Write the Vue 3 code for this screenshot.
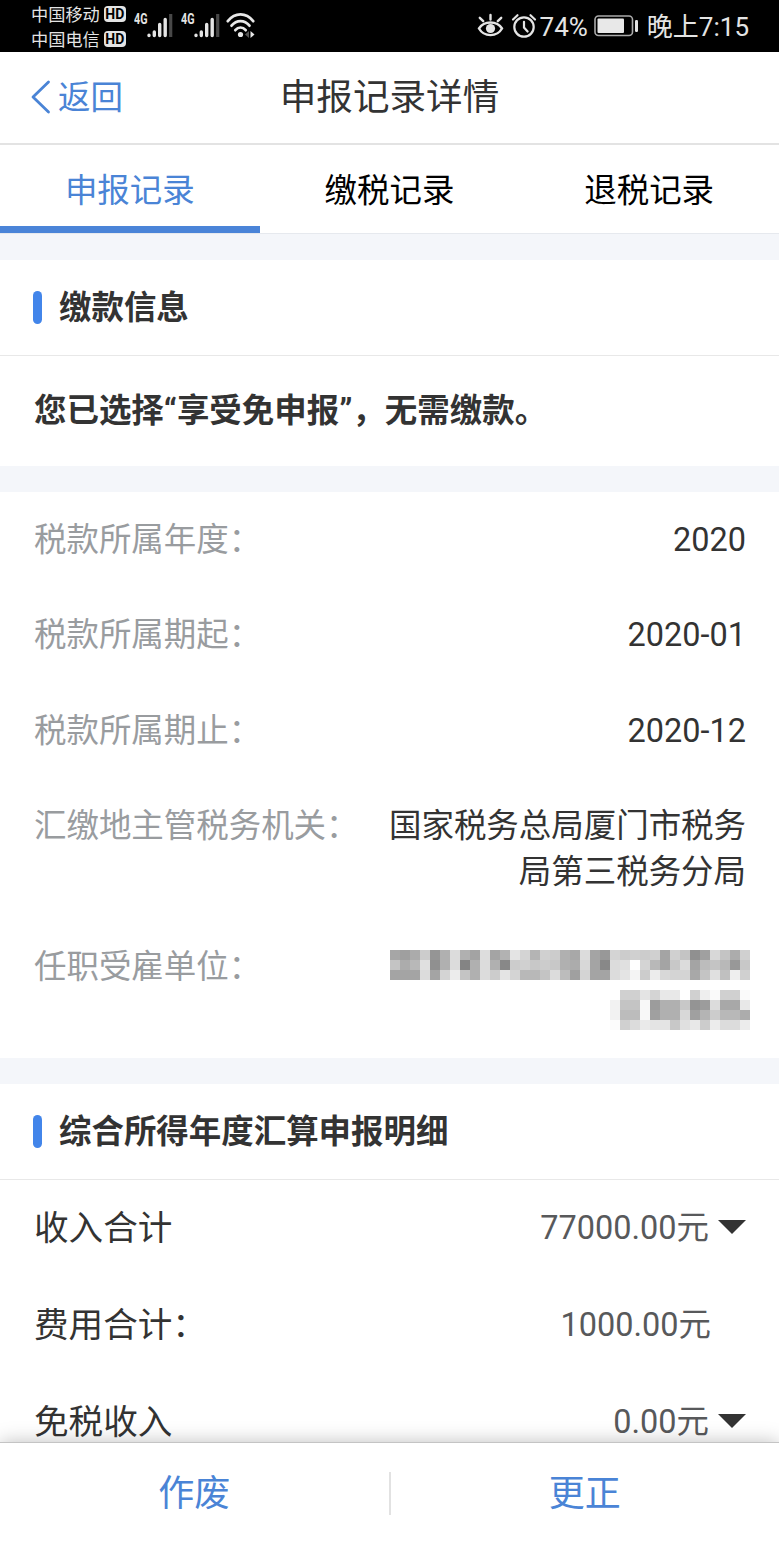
<template>
    <div class="page">
        <div class="status-bar">
            <div class="carriers">
                <div v-for="name in carriers" :key="name" class="carrier">
                    <span>{{ name }}</span>
                    <span class="hd">HD</span>
                </div>
            </div>
            <div v-for="n in 2" :key="n" class="signal">
                <span class="net">4G</span>
                <svg width="26" height="25" viewBox="0 0 26 25">
                    <g stroke="#e4e4e4" stroke-width="3.4" stroke-linecap="round">
                        <path d="M2 22.3v.2M7.3 19v3.5M12.7 11.5v11M18.2 6.500v16" />
                    </g>
                    <path d="M23.700 1v23" stroke="#484848" stroke-width="3.2" />
                </svg>
            </div>
            <svg class="wifi" width="30" height="26" viewBox="0 0 30 26">
                <g fill="none" stroke="#e8e8e8" stroke-width="2.7" stroke-linecap="round">
                    <path d="M1.800 8.200C9-.8 20-.8 27.200 8.200" />
                    <path d="M5.500 12.700c5-6.200 13-6.200 18 0" />
                    <path d="M9.300 17.200c3-3.600 7.400-3.600 10.400 0" />
                </g>
                <circle cx="14.500" cy="21.500" r="2.600" fill="#e8e8e8" />
                <path d="M23 18v7l-4-3.500z" fill="#555" />
                <path d="M24.500 18v7l4-3.500z" fill="#e8e8e8" />
            </svg>
            <div class="spacer"></div>
            <svg class="eye" width="27" height="26" viewBox="0 0 27 26">
                <g fill="none" stroke="#e4e4e4" stroke-width="2.400" stroke-linecap="round">
                    <path d="M2 15.500C7 7.500 20 7.500 25 15.500 20 24.300 7 24.300 2 15.500z" />
                    <path d="M13.500 6.500V2M6.200 8.200L2.800 4.800M20.800 8.200l3.400-3.400" />
                </g>
                <circle cx="13.500" cy="15.500" r="4.600" fill="#e4e4e4" />
            </svg>
            <svg class="alarm" width="26" height="26" viewBox="0 0 26 26">
                <g fill="none" stroke="#e4e4e4" stroke-width="2.200" stroke-linecap="round">
                    <circle cx="13" cy="14" r="9.700" />
                    <path d="M13 8.800V14.500l3.600 4M2 6.500L6.500 2.200M24 6.500L19.500 2.200" />
                </g>
            </svg>
            <span class="status-text">74%</span>
            <svg class="battery" width="45" height="22" viewBox="0 0 45 22">
                <rect x="1" y="1" width="37.500" height="19.500" rx="3.500" fill="none" stroke="#aaa" stroke-width="1.600" />
                <rect x="3.500" y="3.500" width="26.500" height="14.500" rx="1" fill="#e8e8e8" />
                <rect x="41" y="5" width="3" height="12" rx="1.200" fill="#e4e4e4" />
            </svg>
            <span class="status-text">晚上7:15</span>
        </div>

        <div class="nav">
            <button class="back">
                <svg width="20" height="34" viewBox="0 0 20 34">
                    <path d="M17.500 2L2 17l15.500 15" fill="none" stroke="#4a84d6" stroke-width="2.800" stroke-linecap="round" stroke-linejoin="round" />
                </svg>
                <span>返回</span>
            </button>
            <h1>申报记录详情</h1>
        </div>

        <div class="tabs">
            <button
                v-for="(tab, i) in tabs"
                :key="tab"
                class="tab"
                :class="{ active: i === activeTab }"
                @click="activeTab = i"
                >{{ tab }}</button>
        </div>

        <div class="content">
            <section class="card">
                <h2>缴款信息</h2>
                <p class="notice">您已选择“享受免申报”，无需缴款。</p>
            </section>

            <section class="card">
                <div v-for="row in info" :key="row.label" class="info-row">
                    <span class="label">{{ row.label }}</span>
                    <span v-if="row.value" class="value">{{ row.value }}</span>
                    <div v-else class="masked">
                        <div v-for="(line, i) in mosaic" :key="i" class="mosaic-line">
                            <i v-for="(c, j) in line" :key="j" :style="{ background: c }"></i>
                        </div>
                    </div>
                </div>
            </section>

            <section class="card">
                <h2>综合所得年度汇算申报明细</h2>
                <div v-for="row in amounts" :key="row.label" class="amount-row">
                    <span>{{ row.label }}</span>
                    <span class="amount" :class="{ plain: !row.expandable }">{{ row.value }}</span>
                    <span v-if="row.expandable" class="caret"></span>
                </div>
            </section>
        </div>

        <div class="footer">
            <button>作废</button>
            <span class="divider"></span>
            <button>更正</button>
        </div>
    </div>
</template>

<script setup>
import { ref } from 'vue'

const carriers = ['中国移动', '中国电信']
const tabs = ['申报记录', '缴税记录', '退税记录']
const activeTab = ref(0)

const info = [
    { label: '税款所属年度：', value: '2020' },
    { label: '税款所属期起：', value: '2020-01' },
    { label: '税款所属期止：', value: '2020-12' },
    { label: '汇缴地主管税务机关：', value: '国家税务总局厦门市税务局第三税务分局' },
    { label: '任职受雇单位：', value: '' }
]

const amounts = [
    { label: '收入合计', value: '77000.00元', expandable: true },
    { label: '费用合计：', value: '1000.00元', expandable: false },
    { label: '免税收入', value: '0.00元', expandable: true }
]

// grey levels of the masked employer name, one pair of hex digits per tile
const mosaic = [
    'a69fabcc95b0dcb0a3dda4b2e4d4b4d0ccb0a8dca498d4ccd0ccd0a4d0c490a0d8c4acd0',
    'c4acb8e090b0dc84b0dcb088ccd0c8ccc8b0acd8a488dce0ffd4b8a4c8dca4bcc4b898c8',
    'a4a4a4dca4d4ecc4b0dccce4d4b8b8c4dcbca0d4a4a4dce4f4ccecd8d4d4a8c4e0c0eed0',
    '',
    'ffd0d0e4d4e8e8ffd0eefad0d0fa',
    'f2c4c4f89cb0b0c8949cdca8a8e8',
    'f2bcbcf8a0b0b0d8a0b4ccb8b8ac',
    'fcd0dceae4e4c8e0e8ccecdcdcec'
].map((line) => (line.match(/../g) || []).map((h) => `#${h}${h}${h}`))
</script>

<style>
body {
    margin: 0;
    background: #fff;
}
</style>

<style scoped>
.page {
    display: flex;
    flex-direction: column;
    height: 1558px;
    overflow: hidden;
    background: #f4f6fa;
    color: #333;
    font-family: Roboto, "Noto Sans CJK SC", sans-serif;
    font-size: 32.46px;
}

button {
    padding: 0;
    border: 0;
    background: none;
    color: #4a84d6;
    font: inherit;
}

h1, h2, p {
    margin: 0;
}

.status-bar {
    display: flex;
    flex: 0 0 52px;
    height: 52px;
    min-height: 0;
    box-sizing: border-box;
    padding: 0 30px 0 31px;
    background: #000;
    color: #e4e4e4;
}
.carriers {
    width: 103px;
    padding-top: 1px;
}
.carrier {
    display: flex;
    align-items: center;
    gap: 4px;
    height: 25px;
    font-size: 17.2px;
}
.hd {
    width: 22px;
    height: 16px;
    border-radius: 4px;
    background: #e4e4e4;
    color: #000;
    font-size: 14px;
    font-weight: 700;
    line-height: 16px;
    text-align: center;
}
.signal {
    display: flex;
    width: 47px;
}
.net {
    width: 13px;
    margin-top: 12px;
    font-size: 14.5px;
    font-weight: 700;
    line-height: 16px;
    transform: scaleX(.74);
    transform-origin: 0 0;
}
.signal svg {
    margin-top: 13px;
}
.wifi {
    margin: 13px 0 0 -2px;
}
.spacer {
    flex: 1;
}
.eye {
    margin: 13px 7px 0 0;
}
.alarm {
    margin: 13px 3px 0 0;
}
.status-text {
    height: 50px;
    margin-top: 2px;
    font-size: 26px;
    line-height: 50px;
    white-space: nowrap;
}
.battery {
    margin: 15px 8px 0 6px;
}

.nav {
    display: grid;
    grid-template-columns: 1fr auto 1fr;
    align-items: center;
    flex: 0 0 93px;
    box-sizing: border-box;
    padding: 0 31px 6px;
    border-bottom: 2px solid #e3e3e3;
    background: #fff;
}
.back {
    display: flex;
    align-items: center;
    gap: 7px;
}
.back svg {
    margin-top: 4px;
}
h1 {
    font-size: 36.6px;
    font-weight: 400;
}

.tabs {
    display: flex;
    flex: 0 0 88px;
    box-sizing: border-box;
    border-bottom: 1px solid #e6e9ee;
    background: #fff;
}
.tab {
    flex: 1;
    height: 88px;
    box-sizing: border-box;
    padding-top: 4px;
    border-bottom: 7px solid transparent;
    color: #000;
}
.tab.active {
    border-color: #4a84d8;
    color: #4a84d6;
}

.content {
    flex: 1;
    min-height: 0;
    overflow: hidden;
}
.card {
    margin-top: 26px;
    background: #fff;
}
.card:first-child {
    margin-top: 27px;
}
h2 {
    display: flex;
    align-items: center;
    gap: 17px;
    height: 96px;
    box-sizing: border-box;
    padding: 0 0 6px 33px;
    border-bottom: 1px solid #e8e8e8;
    font-size: 32.46px;
    font-weight: 700;
}
h2::before {
    content: "";
    width: 9px;
    height: 33px;
    margin-top: 5px;
    border-radius: 5px;
    background: #4285ea;
}
.notice {
    height: 110px;
    box-sizing: border-box;
    padding: 31px 34px 0;
    font-weight: 700;
    line-height: 48px;
}

.card:first-child {
    margin-top: 26px;
}
.info-row {
    display: flex;
    justify-content: space-between;
    padding: 25px 33px 25px 34px;
    line-height: 45.46px;
}
.info-row:first-child {
    padding-top: 26px;
}
.info-row:last-child {
    padding-bottom: 22px;
}
.label {
    color: #999c9f;
}
.value {
    max-width: 358px;
    text-align: right;
}
.masked {
    height: 91px;
    box-sizing: border-box;
    padding-top: 5px;
    margin-right: -4px;
}
.mosaic-line {
    display: flex;
    justify-content: flex-end;
    height: 10px;
}
.mosaic-line i {
    width: 10px;
}

.amount-row {
    display: flex;
    align-items: center;
    height: 97px;
    box-sizing: border-box;
    padding: 0 33px 8px 34px;
    font-size: 34.6px;
}
.amount {
    margin-left: auto;
    color: #58595b;
    font-size: 32.46px;
}
.amount.plain {
    margin-right: 35px;
}
.caret {
    margin: 4px 0 0 9px;
    border: 14px solid transparent;
    border-top-color: #333;
    border-bottom: 0;
}

.footer {
    display: flex;
    align-items: center;
    position: relative;
    flex: 0 0 116px;
    box-sizing: border-box;
    padding-bottom: 14px;
    border-top: 1px solid #c4c4c4;
    background: #fff;
    box-shadow: 0 0 18px rgba(0, 0, 0, .25);
}
.footer button {
    flex: 1;
    padding-bottom: 7px;
    font-size: 36px;
}
.divider {
    width: 2px;
    height: 43px;
    background: #e2e2e2;
}
</style>
